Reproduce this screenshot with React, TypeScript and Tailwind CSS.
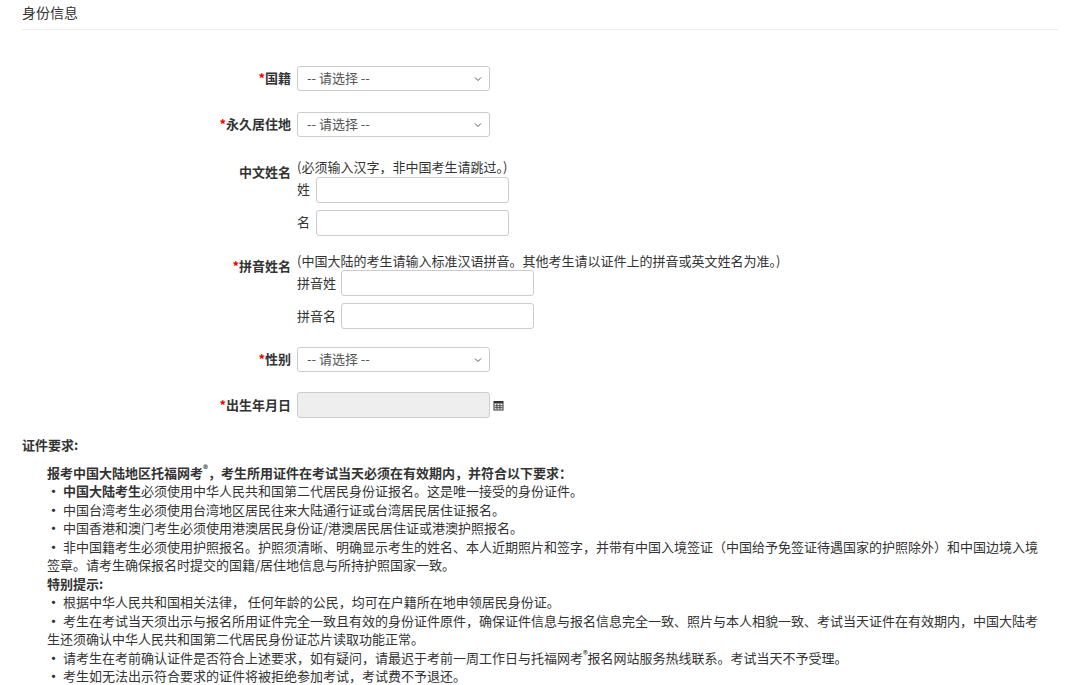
import React from 'react'

const font = { fontFamily: '"Microsoft YaHei", "Noto Sans CJK SC", "Liberation Sans", sans-serif' }

function Label({ text, req }: { text: string; req?: boolean }) {
    return (
        <div className="w-[297px] shrink-0 pr-[6px] text-right font-bold text-[#333]">
            {req && <span className="text-[#e00]">*</span>}
            {text}
        </div>
    )
}

function Select() {
    return (
        <div className="flex h-[25px] w-[193px] items-center justify-between rounded-[3px] border border-[#ccc] bg-white pl-[9px] pr-[6px] text-[#555]">
            <span>-- 请选择 --</span>
            <svg width="10" height="10" viewBox="0 0 10 10">
                <path d="M2 3.5 L5 6.5 L8 3.5" fill="none" stroke="#555" strokeWidth="1" />
            </svg>
        </div>
    )
}

function Input({ gray }: { gray?: boolean }) {
    return <div className={`h-[26px] w-[193px] rounded-[3px] border border-[#ccc] ${gray ? 'bg-[#eee]' : 'bg-white'}`} />
}

function B() {
    return <span className="font-['Liberation_Sans'] font-bold">• </span>
}

export default function App() {
    return (
        <div className="h-[685px] overflow-hidden bg-white text-[13px] leading-[18.5px] text-[#333]" style={font}>
            <div className="mx-[22px] mt-[3px] border-b border-[#eee] pb-[8px] text-[14px] leading-[18px]">身份信息</div>

            <div className="mt-[36px] flex items-center">
                <Label text="国籍" req />
                <Select />
            </div>
            <div className="mt-[21px] flex items-center">
                <Label text="永久居住地" req />
                <Select />
            </div>

            <div className="mt-[21px] flex">
                <div className="pt-[5px]"><Label text="中文姓名" /></div>
                <div>
                    <div>(必须输入汉字，非中国考生请跳过。)</div>
                    <div className="flex items-center gap-[6px]"><span className="w-[13px]">姓</span><Input /></div>
                    <div className="mt-[7px] flex items-center gap-[6px]"><span className="w-[13px]">名</span><Input /></div>
                </div>
            </div>

            <div className="mt-[16px] flex">
                <div className="pt-[5px]"><Label text="拼音姓名" req /></div>
                <div>
                    <div>(中国大陆的考生请输入标准汉语拼音。其他考生请以证件上的拼音或英文姓名为准。)</div>
                    <div className="flex items-center gap-[5px]"><span className="w-[39px]">拼音姓</span><Input /></div>
                    <div className="mt-[7px] flex items-center gap-[5px]"><span className="w-[39px]">拼音名</span><Input /></div>
                </div>
            </div>

            <div className="mt-[18px] flex items-center">
                <Label text="性别" req />
                <Select />
            </div>
            <div className="mt-[20px] flex items-center">
                <Label text="出生年月日" req />
                <Input gray />
                <svg className="ml-[3px]" width="11" height="11" viewBox="0 0 11 11">
                    <rect x="0.5" y="1" width="10" height="9.5" fill="#333" />
                    <rect x="1.5" y="3.5" width="8" height="6" fill="#fff" />
                    <g fill="#333">
                        <rect x="1.5" y="5.3" width="8" height="0.9" />
                        <rect x="1.5" y="7.3" width="8" height="0.9" />
                        <rect x="3.5" y="3.5" width="0.9" height="6" />
                        <rect x="6.5" y="3.5" width="0.9" height="6" />
                    </g>
                </svg>
            </div>

            <div className="mx-[22px] mt-[18px] font-bold">证件要求:</div>
            <div className="ml-[47px] mr-[30px] mt-[9px]">
                <div className="font-bold">报考中国大陆地区托福网考<sup>®</sup>，考生所用证件在考试当天必须在有效期内，并符合以下要求：</div>
                <div><B /><b>中国大陆考生</b>必须使用中华人民共和国第二代居民身份证报名。这是唯一接受的身份证件。</div>
                <div><B />中国台湾考生必须使用台湾地区居民往来大陆通行证或台湾居民居住证报名。</div>
                <div><B />中国香港和澳门考生必须使用港澳居民身份证/港澳居民居住证或港澳护照报名。</div>
                <div><B />非中国籍考生必须使用护照报名。护照须清晰、明确显示考生的姓名、本人近期照片和签字，并带有中国入境签证（中国给予免签证待遇国家的护照除外）和中国边境入境签章。请考生确保报名时提交的国籍/居住地信息与所持护照国家一致。</div>
                <div className="font-bold">特别提示:</div>
                <div><B />根据中华人民共和国相关法律， 任何年龄的公民，均可在户籍所在地申领居民身份证。</div>
                <div><B />考生在考试当天须出示与报名所用证件完全一致且有效的身份证件原件，确保证件信息与报名信息完全一致、照片与本人相貌一致、考试当天证件在有效期内，中国大陆考生还须确认中华人民共和国第二代居民身份证芯片读取功能正常。</div>
                <div><B />请考生在考前确认证件是否符合上述要求，如有疑问，请最迟于考前一周工作日与托福网考<sup>®</sup>报名网站服务热线联系。考试当天不予受理。</div>
                <div><B />考生如无法出示符合要求的证件将被拒绝参加考试，考试费不予退还。</div>
            </div>
        </div>
    )
}
